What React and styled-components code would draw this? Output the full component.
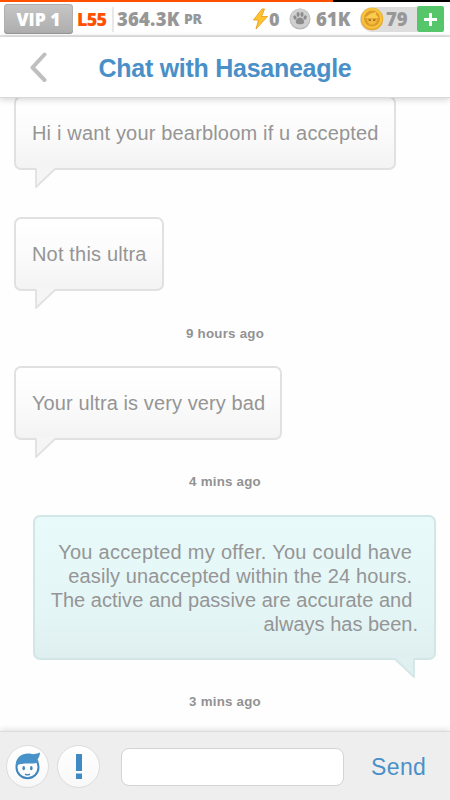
import React from "react";
import styled, { createGlobalStyle } from "styled-components";

const GlobalStyle = createGlobalStyle`
  * { box-sizing: border-box; }
  body {
    margin: 0;
    background: #fefefe;
    font-family: "Liberation Sans", Arial, sans-serif;
  }
`
const Screen = styled.div`
  width: 450px;
  height: 800px;
  display: flex;
  flex-direction: column;
  overflow: hidden;
  background: #fefefe;
`
const Progress = styled.div`
  flex: none;
  height: 2px;
  background: #000;
`
const ProgressFill = styled.div`
  height: 2px;
  background: #ff5000;
`
const StatusBar = styled.div`
  flex: none;
  height: 35px;
  display: flex;
  align-items: center;
  padding: 1px 6px 0 4px;
  border-bottom: 2px solid #e6e6e6;
  background: #fff;
  font-family: "Open Sans", "Noto Sans", sans-serif;
  font-weight: 800;
  color: #979797;
`
const VipBadge = styled.div`
  flex: none;
  width: 69px;
  height: 30px;
  display: flex;
  align-items: center;
  justify-content: center;
  border-radius: 4px;
  background: linear-gradient(#c6c6c6, #adadad);
  box-shadow: inset 0 -1px 0 #979797, inset 0 0 0 1px #b0b0b0;
  color: #fff;
`
const Stat = styled.div`
  flex: none;
  display: flex;
  align-items: center;
  margin-left: ${p => p.$gap || 0}px;
  color: ${p => p.$color || "#979797"};
`
const Figure = styled.span`
  display: block;
  width: ${p => p.$w ? p.$w + "px" : "auto"};
  margin-left: ${p => p.$gap || 0}px;
  font-size: ${p => p.$size || 18}px;
  letter-spacing: ${p => p.$track || 0}px;
  line-height: 26px;
  white-space: nowrap;
`
const Divider = styled.div`
  flex: none;
  width: 2px;
  height: 25px;
  margin-left: 4px;
  background: #e8e8e8;
`
const CoinBox = styled.div`
  flex: none;
  display: flex;
  align-items: center;
  gap: 2px;
  height: 25px;
  width: 57px;
  margin-left: auto;
  border-radius: 13px 0 0 13px;
  background: #dedede;
`
const PlusButton = styled.div`
  flex: none;
  display: flex;
  align-items: center;
  justify-content: center;
  width: 27px;
  height: 26px;
  border-radius: 2px;
  background: #56c66b;
`
const Header = styled.div`
  flex: none;
  position: relative;
  z-index: 1;
  display: grid;
  grid-template-columns: 76px 1fr 76px;
  align-items: center;
  height: 61px;
  border-bottom: 1px solid #d9d9d9;
  background: #fff;
  box-shadow: 0 1px 7px rgba(0, 0, 0, .2);
`
const BackIcon = styled.svg`
  margin-left: 29px;
`
const Title = styled.div`
  padding-top: 2px;
  text-align: center;
  font-size: 25px;
  font-weight: bold;
  letter-spacing: -.27px;
  white-space: nowrap;
  color: #4a90c8;
`
const Messages = styled.div`
  flex: 1;
  min-height: 0;
  overflow: hidden;
  padding: 0 14px;
  margin-top: -2px;
`
const Bubble = styled.div`
  position: relative;
  width: ${p => p.$w}px;
  height: ${p => p.$h || 74}px;
  margin-top: ${p => p.$top || 0}px;
  margin-left: ${p => p.$mine ? "auto" : 0};
  padding: ${p => p.$mine ? "23px 16px 0 0" : "23px 0 0 16px"};
  border: 2px solid ${p => p.$mine ? "#d3e6e7" : "#e1e1e1"};
  border-radius: 7px;
  background: ${p => p.$mine
    ? "linear-gradient(#e9fafb, #e4f5f6 70%, #dfefef)"
    : "linear-gradient(#fff, #fbfbfb 50%, #f3f3f3)"};
`
const BubbleLine = styled.div`
  font-size: 20px;
  line-height: 24px;
  letter-spacing: ${p => p.$track || 0}px;
  white-space: pre;
  text-align: ${p => p.$mine ? "right" : "left"};
  color: #959595;
`
const TailSvg = styled.svg`
  position: absolute;
  top: calc(100% - 1px);
  ${p => p.$mine ? "right: 17px; transform: scaleX(-1);" : "left: 17px;"}
`
const Timestamp = styled.div`
  height: 16px;
  margin-top: ${p => p.$top}px;
  text-align: center;
  font-size: 13.3px;
  line-height: 16px;
  font-weight: bold;
  letter-spacing: .24px;
  color: #929292;
`
const Footer = styled.div`
  flex: none;
  position: relative;
  display: flex;
  align-items: center;
  height: 69px;
  padding: 1px 0 0 6px;
  border-top: 1px solid #dcdcdc;
  background: #eee;
  box-shadow: 0 -1px 6px rgba(0, 0, 0, .14);
`
const RoundButton = styled.div`
  display: flex;
  align-items: center;
  justify-content: center;
  width: 43px;
  height: 43px;
  margin: 0 8px 1px 0;
  border: 1px solid #dcdcdc;
  border-radius: 50%;
  background: linear-gradient(#fff, #f8f8f8);
`
const MessageInput = styled.input`
  width: 223px;
  height: 38px;
  margin-left: 13px;
  padding: 0 10px;
  border: 1px solid #d3d3d3;
  border-radius: 8px;
  outline: 0;
  background: #fff;
  font-size: 20px;
`
const SendButton = styled.div`
  margin-left: 27px;
  padding-top: 2px;
  font-size: 23px;
  letter-spacing: .4px;
  color: #4a90c8;
`

const Tail = ({ mine }) => (
  <TailSvg $mine={mine} width="24" height="22" viewBox="0 0 24 22">
    <path d="M3 0V19.5L22 1.5V0Z" fill={mine ? "#e0f0f1" : "#f5f5f5"} />
    <path d="M0 2H3V20L22 2H24" fill="none" stroke={mine ? "#d3e6e7" : "#e1e1e1"} strokeWidth="1.8" strokeLinejoin="round" />
    <path d="M4 0H21V1.5L20 2.6H4Z" fill={mine ? "#e0f0f1" : "#f5f5f5"} />
  </TailSvg>
)

const Message = ({ mine, width, height, top, lines }) => (
  <Bubble $mine={mine} $w={width} $h={height} $top={top}>
    {lines.map(([text, track]) => (
      <BubbleLine key={text} $mine={mine} $track={track}>{text}</BubbleLine>
    ))}
    <Tail mine={mine} />
  </Bubble>
)

const Bolt = () => (
  <svg width="17" height="22" viewBox="0 0 16 22">
    <path d="M9.5 1 1 12h5L3.5 21 15 8.5H9L12 1Z" fill="#ffc32f" stroke="#eda52b" strokeWidth="1" strokeLinejoin="round" />
  </svg>
)

const Paw = () => (
  <svg width="22" height="22" viewBox="0 0 22 22">
    <circle cx="11" cy="11" r="10.5" fill="#b9b9b9" />
    <circle cx="11" cy="10.3" r="9.7" fill="#cfcfcf" />
    <g fill="#8c8c8c">
      <ellipse cx="6" cy="9.5" rx="1.5" ry="2.2" transform="rotate(-25 6 9.5)" />
      <ellipse cx="9.1" cy="6.5" rx="1.5" ry="2.4" />
      <ellipse cx="13" cy="6.5" rx="1.5" ry="2.4" />
      <ellipse cx="16.1" cy="9.5" rx="1.5" ry="2.2" transform="rotate(25 16.1 9.5)" />
      <path d="M11 9.4c2.6 0 4.6 3 4.1 5.2-.5 2-2.5 1.6-4.1 1.6s-3.6.4-4.1-1.6c-.5-2.2 1.5-5.2 4.1-5.2Z" />
    </g>
  </svg>
)

const Coin = () => (
  <svg width="24" height="24" viewBox="0 0 24 24">
    <circle cx="12" cy="12" r="11.2" fill="#e8a62c" />
    <circle cx="12" cy="11.3" r="10.5" fill="#f8c43c" />
    <circle cx="12" cy="11.5" r="8" fill="#dc9c2c" />
    <path d="M5 10.500C8 9.500 8.500 7 12.500 6l4-1-.8 2.500 2.800 3-1 .8H6Z" fill="#fbcd4c" />
    <path d="M7 12h10l-.5 3-2.500 2.500h-4L7.500 15Z" fill="#f3bb3b" />
    <path d="M8 12.300h3v1.700H9ZM13 12.300h3l-1 1.700h-2Z" fill="#a9701f" />
  </svg>
)

const Face = () => (
  <svg width="26" height="28" viewBox="0 0 26 28">
    <circle cx="12.5" cy="15.2" r="11" fill="#fcfcfc" stroke="#3f87bd" strokeWidth="2" />
    <path d="M.7 14.5C.2 6 6 1.500 13 1.500c3 0 4 1 6.500.5 2-.3 3.500-.8 5.500-1.500-.2 3-.8 5-2.400 6.700.5 1 .8 1.700 1 3-3 1.600-6.500 1.200-10.500 1.300C8.500 11.600 4 11.500 .7 14.500Z" fill="#4793c9" />
    <ellipse cx="8.7" cy="16.2" rx="1.3" ry="2.1" fill="#3f87bd" />
    <ellipse cx="16.3" cy="16.2" rx="1.3" ry="2.1" fill="#3f87bd" />
    <path d="M10.5 22.3q2 1 4 0" fill="none" stroke="#3f87bd" strokeWidth="1.3" strokeLinecap="round" />
  </svg>
)

const App = () => {
  return (
    <>
      <GlobalStyle />
      <Screen>
        <Progress><ProgressFill style={{ width: "74%" }} /></Progress>

        <StatusBar>
          <VipBadge><Figure $size={17.5}>VIP 1</Figure></VipBadge>
          <Stat $gap={4} $color="#ff5000"><Figure $w={31} $track={-.7}>L55</Figure></Stat>
          <Divider />
          <Stat $gap={3}>
            <Figure $w={67} $size={18.5} $track={.2}>364.3K</Figure>
            <Figure $w={19} $size={14} $track={-.4}>PR</Figure>
          </Stat>
          <Stat $gap={49}><Bolt /><Figure $w={12}>0</Figure></Stat>
          <Stat $gap={8}><Paw /><Figure $w={37} $gap={5} $size={18.5}>61K</Figure></Stat>
          <CoinBox><Coin /><Figure $w={24} $size={18.5}>79</Figure></CoinBox>
          <PlusButton>
            <svg width="13" height="13" viewBox="0 0 13 13">
              <path d="M6.5 0v13M0 6.5h13" stroke="#fff" strokeWidth="3" />
            </svg>
          </PlusButton>
        </StatusBar>

        <Header>
          <BackIcon width="19" height="31" viewBox="0 0 19 31">
            <path d="M15.5 2.5 3.5 15.500l12 12.500" fill="none" stroke="#bfbfbf" strokeWidth="4" strokeLinecap="round" strokeLinejoin="round" />
          </BackIcon>
          <Title>Chat with Hasaneagle</Title>
        </Header>

        <Messages>
          <Message width={382} lines={[["Hi i want your bearbloom if u accepted", .17]]} />
          <Message width={150} top={47} lines={[["Not this ultra", .17]]} />
          <Timestamp $top={35}>9 hours ago</Timestamp>
          <Message width={268} top={24} lines={[["Your ultra is very very bad", .1]]} />
          <Timestamp $top={34}>4 mins ago</Timestamp>
          <Message
            mine
            width={403}
            height={145}
            top={25}
            lines={[
              ["You accepted my offer. You could have ", .28],
              ["easily unaccepted within the 24 hours. ", .13],
              ["The active and passive are accurate and ", .04],
              ["always has been.", 0],
            ]}
          />
          <Timestamp $top={34}>3 mins ago</Timestamp>
        </Messages>

        <Footer>
          <RoundButton><Face /></RoundButton>
          <RoundButton>
            <svg width="8" height="25" viewBox="0 0 8 25">
              <path d="M1 0h6v17H1ZM1 19.5h6v5.5H1Z" fill="#3f8ac2" />
            </svg>
          </RoundButton>
          <MessageInput />
          <SendButton>Send</SendButton>
        </Footer>
      </Screen>
    </>
  )
}

export default App;
